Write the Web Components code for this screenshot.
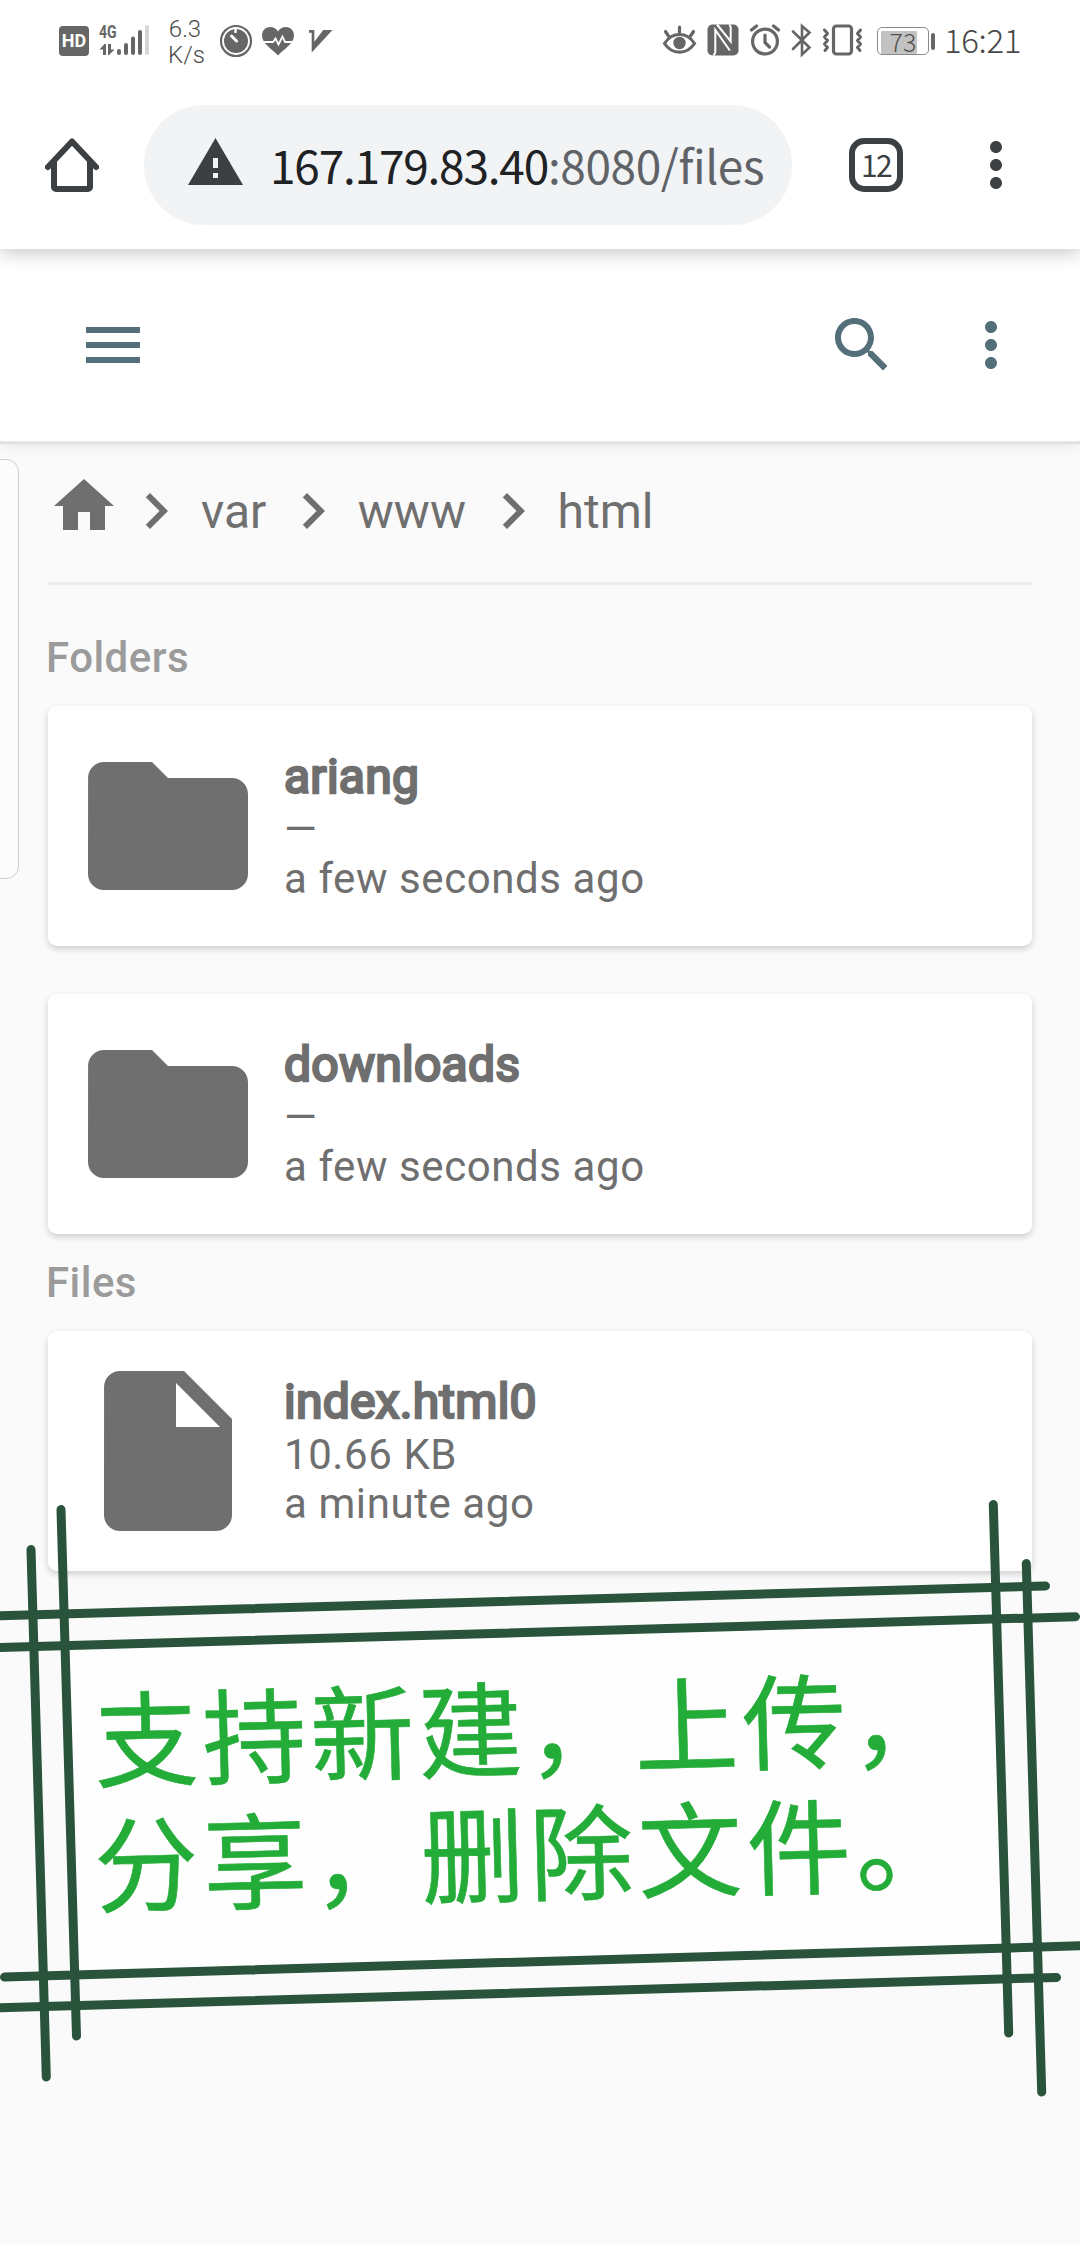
<!DOCTYPE html>
<html lang="en">
<head>
<meta charset="utf-8">
<title>html - File Browser</title>
<style>
  html, body { margin: 0; padding: 0; background: #fafafa; }
  body { width: 1080px; height: 2244px; overflow: hidden; position: relative; font-family: Roboto, sans-serif; }
</style>
</head>
<body>
<phone-screen></phone-screen>

<script>
const define = (name, html, setup) => {
  const tpl = document.createElement('template');
  tpl.innerHTML = html;
  customElements.define(name, class extends HTMLElement {
    constructor() {
      super();
      this.attachShadow({ mode: 'open' }).appendChild(tpl.content.cloneNode(true));
    }
    connectedCallback() { if (setup) setup(this, this.shadowRoot); }
  });
};

/* name: [viewBox, width, height, markup] */
const M = '0 0 24 24';
const ICONS = {
  hd: ['59 20 30 42', 30, 42, '<rect x="59" y="26" width="30" height="30" rx="4" fill="currentColor"/>'],
  signal: ['99 20 52 42', 52, 42, `
    <path d="M99.500 49.500l5-5.500h1.500v11h-3v-5.500z" fill="currentColor"/>
    <path d="M108 44h3v5.500h3.500L109 55h-1z" fill="currentColor"/>
    <g stroke="currentColor" stroke-width="4" stroke-linecap="round"><path d="M119 51v2M126 45v8M133 38.500v14.500M140 32v21"/><path d="M147 27v26" stroke="#d6d6d6"/></g>`],
  timer: ['220 20 32 42', 32, 42, `
    <circle cx="236" cy="41" r="15" fill="none" stroke="currentColor" stroke-width="2.200"/>
    <circle cx="236" cy="41" r="12" fill="currentColor"/>
    <path d="M235.500 29v4" stroke="#fff" stroke-width="2.500"/>
    <path d="M231.500 36l5 5" stroke="#fff" stroke-width="3" stroke-linecap="round"/>`],
  heart: ['262 20 32 42', 32, 42, `
    <path d="M278 55.500C272 49 262 43.500 262 35.500c0-5 3.600-8.500 8-8.500 3.500 0 6.500 1.600 8 4.600 1.500-3 4.500-4.600 8-4.600 4.400 0 8 3.500 8 8.500 0 8-10 13.500-16 20z" fill="currentColor"/>
    <path d="M262 42h11l2.500-3.500 3 6 4-8 2.500 5.500h9" fill="none" stroke="#fff" stroke-width="1.800"/>`],
  vee: ['308 20 25 42', 25, 42, '<path d="M309 30h5.300v11.700L323.300 30h9.200L311.700 52.500V32.700H309z" fill="currentColor"/>'],
  eye: ['662 20 35 42', 35, 42, `
    <g fill="none" stroke="currentColor" stroke-width="3.200" stroke-linecap="round">
    <path d="M664.500 43.500C672 31.500 687 31.500 694.500 43.500 687 55 672 55 664.500 43.500z"/>
    <path d="M679.500 27v5M665.500 31.500l3 4.500M693.500 31.500l-3 4.500"/></g><circle cx="679.500" cy="43" r="6.200" fill="currentColor"/>`],
  nfc: ['707 20 32 42', 32, 42, `
    <rect x="707.500" y="24.500" width="31" height="31" rx="5" fill="currentColor"/>
    <path d="M713.500 55.500l1.800-3V30l14.500 20.500M717 24.500l13.700 17V27l-1.200-2.500" fill="none" stroke="#fff" stroke-width="2"/>`],
  alarm: ['749 20 32 42', 32, 42, `
    <g fill="none" stroke="currentColor" stroke-width="3.200" stroke-linecap="round"><circle cx="765" cy="41.500" r="12.400"/>
    <path d="M765 35v7.500l4.500 4.500"/><path d="M751.500 30l5-4M778.500 30l-5-4"/></g>`],
  bt: ['791 20 21 42', 21, 42, '<path d="M793 31.500l16.500 16L802 54.500V26l7.500 6.500L793 49" fill="none" stroke="currentColor" stroke-width="2.600" stroke-linecap="round"/>'],
  vibrate: ['822 20 41 42', 41, 42, `
    <rect x="833.500" y="26" width="18" height="28" rx="3" fill="none" stroke="currentColor" stroke-width="3.200"/>
    <path d="M824.500 30l3 3.500-3 3.500 3 3.500-3 3.500 3 3.500-2.500 3M860.500 30l-3 3.500 3 3.500-3 3.500 3 3.500-3 3.500 2.500 3" fill="none" stroke="currentColor" stroke-width="3" stroke-linecap="round" stroke-linejoin="round"/>`],
  homeOutline: ['45 138 54 54', 54, 54, `
    <g fill="none" stroke="currentColor" stroke-width="6"><path d="M54 160v27a2 2 0 0 0 2 2h32a2 2 0 0 0 2-2V160"/>
    <path d="M48 167l24-25.500 24 25.500" stroke-linecap="round" stroke-linejoin="round"/></g>
    <path d="M56 185h3v3h-3zM85 185h3v3h-3z" fill="currentColor" fill-opacity="0"/>`],
  warn: ['0 0 55 47', 55, 47, '<path d="M27.500 0L55 47H0z" fill="currentColor"/><path d="M25 20h5v10h-5zM25 35h5v5h-5z" fill="#f1f3f4"/>'],
  dots: [M, 72, 72, '<path fill="currentColor" d="M12 8c1.100 0 2-.9 2-2s-.9-2-2-2-2 .9-2 2 .9 2 2 2zm0 2c-1.100 0-2 .9-2 2s.9 2 2 2 2-.9 2-2-.9-2-2-2zm0 6c-1.100 0-2 .9-2 2s.9 2 2 2 2-.9 2-2-.9-2-2-2z"/>'],
  menu: [M, 72, 72, '<path fill="currentColor" d="M3 18h18v-2H3v2zm0-5h18v-2H3v2zm0-7v2h18V6H3z"/>'],
  search: [M, 72, 72, '<path fill="currentColor" d="M15.500 14h-.79l-.28-.27C15.410 12.590 16 11.110 16 9.500 16 5.910 13.090 3 9.500 3S3 5.910 3 9.500 5.910 16 9.500 16c1.610 0 3.090-.59 4.230-1.570l.27.28v.79l5 4.990L20.490 19l-4.990-5zm-6 0C7.010 14 5 11.990 5 9.500S7.010 5 9.500 5 14 7.010 14 9.500 11.990 14 9.500 14z"/>'],
  home: [M, 72, 72, '<path fill="currentColor" d="M10 20v-6h4v6h5v-8h3L12 3 2 12h3v8z"/>'],
  chevron: [M, 72, 72, '<path fill="currentColor" d="M10 6L8.590 7.410 13.170 12l-4.580 4.590L10 18l6-6z"/>'],
  folder: [M, 192, 192, '<path fill="currentColor" d="M10 4H4c-1.100 0-1.990.9-1.990 2L2 18c0 1.100.9 2 2 2h16c1.100 0 2-.9 2-2V8c0-1.100-.9-2-2-2h-8l-2-2z"/>'],
  file: [M, 192, 192, '<path fill="currentColor" d="M6 2c-1.100 0-1.990.9-1.990 2L4 20c0 1.100.89 2 1.990 2H18c1.100 0 2-.9 2-2V8l-6-6H6zm7 7V3.500L18.500 9H13z"/>']
};

define('ui-icon', `<style>:host{display:block;flex:none;line-height:0}svg{display:block}</style><div></div>`, (el, root) => {
  const [vb, w, h, body] = ICONS[el.getAttribute('name')];
  root.querySelector('div').innerHTML = `<svg viewBox="${vb}" width="${w}" height="${h}">${body}</svg>`;
});

/* Spreads its text over the advance width given in "w", by letter spacing. */
define('fit-text', `<style>:host{display:inline-block;white-space:pre;flex:none}</style><span><slot></slot></span>`, (el, root) => {
  const span = root.querySelector('span');
  const want = parseFloat(el.getAttribute('w'));
  span.style.letterSpacing = ((want - span.getBoundingClientRect().width) / el.textContent.length) + 'px';
});

define('battery-level', `<style>
  :host{display:flex;align-items:center;gap:2px;flex:none}
  .cell{box-sizing:border-box;width:52px;height:28px;border:1.500px solid #8a8a8a;border-radius:5px;padding:2.500px;display:grid}
  .fill{width:36px;background:#c2c2c2;grid-area:1/1;border-radius:1px}
  .n{grid-area:1/1;place-self:center;font:300 25px/20px "Noto Sans CJK SC",sans-serif;color:#505050;padding-bottom:3px}
  .tip{width:4px;height:17px;border-radius:2px;background:#666}
</style><div class="cell"><div class="fill"></div><div class="n"><slot></slot></div></div><div class="tip"></div>`);

define('status-bar', `<style>
  :host{display:flex;align-items:center;height:82px;padding:0 0 0 59px;color:#666;box-sizing:border-box}
  .hd{display:grid}.hd>*{grid-area:1/1}
  .hd b{place-self:center;color:#fff;font:700 18px/20px Roboto,sans-serif;position:relative;z-index:1}
  .sig{display:grid;margin-left:10px}.sig>*{grid-area:1/1}
  .sig b{align-self:start;justify-self:start;font:700 18px/16px "Roboto",sans-serif;padding-top:4px;transform:scaleX(.78);transform-origin:0 0}
  .rate{width:34px;margin-left:17px;font:300 24px/26px Roboto,sans-serif;text-align:center;color:#4c4c4c;padding-top:1px}
  .gap{flex:1}
  .time{font:300 33px/40px "Noto Sans CJK SC",sans-serif;margin-left:9px;width:136px;color:#484848;padding-bottom:4px}
</style>
<div class="hd"><ui-icon name="hd"></ui-icon><b>HD</b></div>
<div class="sig"><ui-icon name="signal"></ui-icon><b>4G</b></div>
<div class="rate">6.3<br>K/s</div>
<ui-icon name="timer" style="margin-left:18px"></ui-icon>
<ui-icon name="heart" style="margin-left:10px"></ui-icon>
<ui-icon name="vee" style="margin-left:14px"></ui-icon>
<div class="gap"></div>
<ui-icon name="eye"></ui-icon>
<ui-icon name="nfc" style="margin-left:10px"></ui-icon>
<ui-icon name="alarm" style="margin-left:10px"></ui-icon>
<ui-icon name="bt" style="margin-left:10px"></ui-icon>
<ui-icon name="vibrate" style="margin-left:10px"></ui-icon>
<battery-level style="margin-left:14px">73</battery-level>
<div class="time"><fit-text w="77">16:21</fit-text></div>`);

define('address-bar', `<style>
  :host{display:flex;align-items:center;height:167px;box-sizing:border-box;padding:23px 48px 24px 45px;background:#fff;color:#3c4043;
    box-shadow:0 3px 18px rgba(0,0,0,.24);position:relative;z-index:2;clip-path:inset(0 0 -24px 0)}
  .pill{margin-left:45px;width:648px;height:120px;border-radius:60px;background:#f1f3f4;display:flex;align-items:center;box-sizing:border-box;padding-left:44px}
  .pill ui-icon{margin-top:-7px}
  .url{margin-left:27px;font:400 46px/60px "Noto Sans CJK SC",sans-serif;color:#202124;white-space:nowrap;display:flex;padding-bottom:3px}
  .url .rest{color:#5f6368}
  .tabs{margin-left:57px;box-sizing:border-box;width:54px;height:54px;border:6px solid currentColor;border-radius:15px;
    font:400 30px/40px "Noto Sans CJK SC",sans-serif;display:flex;align-items:center;justify-content:center;padding-bottom:3px}
  .more{margin-left:57px}
</style>
<ui-icon name="homeOutline"></ui-icon>
<div class="pill"><ui-icon name="warn"></ui-icon>
  <div class="url"><fit-text w="278">167.179.83.40</fit-text><fit-text class="rest" w="216">:8080/files</fit-text></div></div>
<div class="tabs"><fit-text w="30">12</fit-text></div>
<ui-icon class="more" name="dots"></ui-icon>`);

define('app-header', `<style>
  :host{display:flex;align-items:center;height:192px;padding:0 53px 0 77px;background:#fff;color:#546e7a;border-bottom:3px solid rgba(0,0,0,.075);
    background-clip:padding-box;box-shadow:0 0 15px rgba(0,0,0,.1);position:relative;z-index:1}
  .gap{flex:1}
</style><ui-icon name="menu"></ui-icon><div class="gap"></div><ui-icon name="search" style="margin-right:57.500px"></ui-icon><ui-icon name="dots"></ui-icon>`);

define('crumb-trail', `<style>
  :host{display:flex;align-items:center;height:138px;box-sizing:border-box;padding-bottom:4px;font:400 48px/57px Roboto,sans-serif;color:#6f6f6f}
  span{padding:0 10.500px 0 9px}
  .h{margin-top:-10px}
</style><ui-icon class="h" name="home"></ui-icon>
<ui-icon name="chevron"></ui-icon><span>var</span><ui-icon name="chevron"></ui-icon><span>www</span><ui-icon name="chevron"></ui-icon><span>html</span>`);

define('section-title', `<style>:host{display:block;font:500 42px/49px Roboto,sans-serif;letter-spacing:.45px;color:#9b9b9b;margin-bottom:24px;margin-left:-2px}</style><slot></slot>`);

/* One folder or file card: kind, size and modification date are attributes, the name is slotted. */
class FileRow extends HTMLElement {
  constructor() { super(); this.attachShadow({ mode: 'open' }); }
  connectedCallback() {
    this.shadowRoot.innerHTML = `<style>
      :host{display:flex;align-items:center;height:240px;box-sizing:border-box;padding:0 24px;background:#fff;border-radius:9px;color:#6f6f6f;
        box-shadow:0 3px 9px rgba(0,0,0,.06),0 3px 6px rgba(0,0,0,.12)}
      .t{margin-left:20px;padding-bottom:2px;font:400 42px/49px Roboto,sans-serif;letter-spacing:.58px}
      .n{font-size:48px;line-height:57px;letter-spacing:.25px;-webkit-text-stroke:2.500px currentColor}
    </style><ui-icon name="${this.getAttribute('kind')}"></ui-icon>
    <div class="t"><div class="n"><slot></slot></div><div>${this.getAttribute('size')}</div><div>${this.getAttribute('modified')}</div></div>`;
  }
}
customElements.define('file-row', FileRow);

define('file-listing', `<style>
  :host{display:block;padding:0 48px}
  hr{margin:0 0 48px;border:0;height:3px;background:#ececec}
  .group{display:flex;flex-direction:column;gap:48px;margin-bottom:24px}
</style>
<crumb-trail></crumb-trail><hr>
<section-title>Folders</section-title>
<div class="group">
  <file-row kind="folder" size="—" modified="a few seconds ago">ariang</file-row>
  <file-row kind="folder" size="—" modified="a few seconds ago">downloads</file-row>
</div>
<section-title>Files</section-title>
<div class="group"><file-row kind="file" size="10.66 KB" modified="a minute ago">index.html0</file-row></div>`);

define('edge-handle', `<style>:host{position:absolute;left:-20px;top:459px;width:39px;height:420px;box-sizing:border-box;border:1.500px solid #cfcfcf;border-radius:13px;background:#fcfcfc}</style>`);

/* Hand-drawn frame with a tilted caption, laid over the list. */
define('drawn-note', `<style>
  :host{position:absolute;left:0;top:1490px;width:1080px;height:620px;z-index:3}
  svg{position:absolute;left:0;top:0}
  p{position:absolute;left:94px;margin:0;font:400 104px/128px "Noto Sans CJK SC",sans-serif;color:#23ac38;-webkit-text-stroke:.6px #23ac38;white-space:nowrap;transform:rotate(-1.500deg);transform-origin:0 50%}
  .a{top:181px}.b{top:306px}
</style>
<svg width="1080" height="620" viewBox="0 1490 1080 620">
  <path d="M65 1646L997 1619l9 329L74 1975z" fill="#fff" fill-opacity=".7"/>
  <g stroke="#29533b" stroke-width="9" stroke-linecap="round">
    <path d="M31 1549.500L46.300 2077M61 1509.500L76.500 2036M993.300 1504.500L1008.700 2033M1026.300 1563.500L1041.700 2092"/>
    <path d="M-5 1616L1045.500 1586M-5 1647.700L1075.500 1616.700M4.500 1977L1085 1945.700M-5 2008L1056.500 1977.400"/>
  </g>
</svg>
<p class="a"><fit-text w="868">支持新建，上传，</fit-text></p>
<p class="b"><fit-text w="874">分享，删除文件。</fit-text></p>`);

define('phone-screen', `<style>:host{display:block;width:1080px;height:2244px;background:#fafafa}.top{background:#fff}</style>
<status-bar class="top"></status-bar>
<address-bar></address-bar>
<app-header></app-header>
<file-listing></file-listing>
<edge-handle></edge-handle>
<drawn-note></drawn-note>`);
</script>
</body>
</html>
